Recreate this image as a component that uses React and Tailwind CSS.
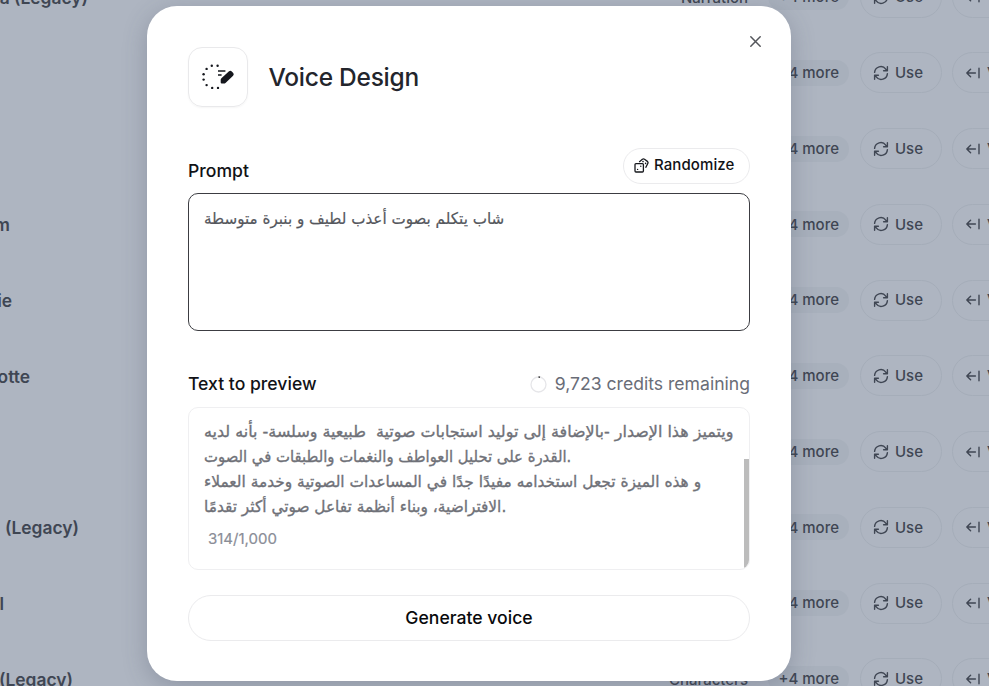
import React from 'react';

const rows = [
  { name: 'Matilda (Legacy)', end: 88, tag: 'Narration' },
  { name: '', end: 0 },
  { name: '', end: 0 },
  { name: 'Liam', end: 10 },
  { name: 'Jessie', end: 12 },
  { name: 'Charlotte', end: 30 },
  { name: '', end: 0 },
  { name: '(Legacy)', end: 79 },
  { name: 'Bill', end: 4 },
  { name: '(Legacy)', end: 73, tag: 'Characters' },
];

const RefreshIcon = () => (
  <svg className="mb-[1px]" width="16" height="16" viewBox="0 0 16 16" fill="none" stroke="currentColor" strokeWidth="1.4" strokeLinecap="round" strokeLinejoin="round">
    <path d="M1.6 7.4A6.2 6.2 0 0 1 12.8 4.2L14.2 5.8M14.4 1.8V5.8H10.6" />
    <path d="M14.4 8.6A6.2 6.2 0 0 1 3.2 11.8L1.8 10.2M1.6 14.2V10.2H5.4" />
  </svg>
);

const ArrowIcon = () => (
  <svg className="mb-[1px]" width="16" height="14" viewBox="0 0 16 14" fill="none" stroke="currentColor" strokeWidth="1.4" strokeLinecap="round" strokeLinejoin="round">
    <path d="M5.6 3.2 1.8 7 5.6 10.8M1.8 7H10.4M14 2.2V11.8" />
  </svg>
);

const VoiceIcon = () => (
  <svg width="34" height="28" viewBox="0 0 34 28" fill="none">
    <g fill="#15171d">
      <circle cx="16.6" cy="2.8" r="1.2" />
      <circle cx="10.8" cy="2.8" r="1.2" />
      <circle cx="5.6" cy="5.9" r="1.2" />
      <circle cx="2.6" cy="11.2" r="1.2" />
      <circle cx="2.6" cy="16.6" r="1.2" />
      <circle cx="5.6" cy="22.1" r="1.2" />
      <circle cx="11.2" cy="24.9" r="1.2" />
      <circle cx="17" cy="24.9" r="1.2" />
    </g>
    <path d="M17 8H24.4M17 12H20.6" stroke="#15171d" strokeWidth="1.5" />
    <path d="M20.4 15.2 28 8.3Q29.4 7.2 30.8 8.5L32.2 10.1Q33.4 11.4 32.1 12.8L24.5 20Q23.8 20.6 22.8 20.6H20.8Q19.7 20.6 19.7 19.6V16.8Q19.7 15.8 20.4 15.2Z" fill="#15171d" />
  </svg>
);

const DiceIcon = () => (
  <svg width="15" height="15" viewBox="0 0 15 15" fill="none" stroke="#16181d" strokeWidth="1.3" strokeLinejoin="round">
    <rect x="1" y="5.6" width="8.4" height="8.4" rx="1" />
    <path d="M5.2 3.9 8.4 1.3Q9.4.6 10.5 1.3L13.4 3.4Q14.4 4.3 13.8 5.5L11.6 9.8" />
    <g fill="#16181d" stroke="none">
      <circle cx="3.6" cy="11.4" r=".7" />
      <circle cx="6.8" cy="8.3" r=".7" />
      <circle cx="9" cy="3.6" r=".8" />
      <circle cx="11.6" cy="5.4" r=".8" />
    </g>
  </svg>
);

const VoiceRow = ({ name, end, tag }) => (
  <div className="flex h-[75.75px] w-[1040px] shrink-0 items-center text-[15px] font-medium">
    <div className="flex shrink-0 justify-end overflow-hidden whitespace-nowrap pt-[2px] text-[17.4px] font-semibold" style={{ width: end }}>
      <span>{name}</span>
    </div>
    <div className="flex flex-1 justify-end pr-[20px] pt-[2px]">{tag}</div>
    <div className="flex h-[26px] w-[81px] shrink-0 items-center justify-end whitespace-nowrap rounded-full bg-[#a8b0bc] pr-[10px] pt-[1px]">
      +4 more
    </div>
    <div className="ml-[11px] flex h-[41px] w-[82px] shrink-0 items-center gap-[6px] rounded-full border border-[#a5adb9] pl-[12px] pt-[1px]">
      <RefreshIcon />
      Use
    </div>
    <div className="ml-[10px] mr-[-10px] flex h-[41px] w-[98px] shrink-0 items-center gap-[6px] rounded-full border border-[#a5adb9] pl-[12px] pt-[1px]">
      <ArrowIcon />
      View
    </div>
  </div>
);

const VoiceDesignModal = () => (
  <div className="relative h-[675px] w-[644px] rounded-[30px] bg-white px-[41px] pt-[41px] shadow-[0_6px_24px_rgba(60,70,90,0.28)]">
    <button type="button" aria-label="Close" className="absolute right-[29px] top-[29px]">
      <svg width="13" height="13" viewBox="0 0 13 13" stroke="#54565b" strokeWidth="1.5" strokeLinecap="round">
        <path d="M1.8 1.8 11.2 11.2M11.2 1.8 1.8 11.2" />
      </svg>
    </button>

    <div className="flex items-center gap-[20.5px]">
      <div className="flex size-[60px] items-center justify-center rounded-[14px] border border-[#e9e9eb] shadow-[0_1px_2px_rgba(0,0,0,0.04)]">
        <VoiceIcon />
      </div>
      <h1 className="text-[24.5px] font-medium tracking-[-0.25px] text-[#23252c]">Voice Design</h1>
    </div>

    <div className="mt-[41px] flex h-[35px] items-center justify-between">
      <label className="pt-[12px] text-[17.6px] font-medium text-[#111216]">Prompt</label>
      <button type="button" className="flex h-[36px] w-[127px] items-center gap-[5px] rounded-full border border-[#ebebed] pl-[10px] text-[15px] font-medium tracking-[0.1px] text-[#111216]">
        <DiceIcon />
        Randomize
      </button>
    </div>

    <div dir="ltr" className="mt-[10px] h-[138px] rounded-[10px] border border-[#3c3d42] px-[15px] pt-[12px] font-['DejaVu_Sans',sans-serif] text-[16px] leading-[25px] text-[#55575d]">
      <p className="origin-left scale-x-[0.946] whitespace-nowrap [-webkit-text-stroke:0.2px]">شاب يتكلم بصوت أعذب لطيف و بنبرة متوسطة</p>
    </div>

    <div className="mt-[40px] flex h-[26px] items-center justify-between">
      <label className="text-[17.6px] font-medium text-[#111216]">Text to preview</label>
      <div className="flex items-center gap-[8px] text-[17.6px] text-[#696d77]">
        <svg width="17" height="17" viewBox="0 0 17 17" fill="none" strokeWidth="1.3">
          <circle cx="8.5" cy="8.5" r="7.5" stroke="#e6e6e9" />
          <path d="M8.5 1A7.5 7.5 0 0 1 10 1.2" stroke="#333" strokeWidth="1.6" />
        </svg>
        9,723 credits remaining
      </div>
    </div>

    <div className="mt-[10px] flex h-[163px] justify-between overflow-hidden rounded-[10px] border border-[#efeff1] pl-[15px]">
      <div className="pt-[11px]">
        <div dir="ltr" className="whitespace-pre font-['DejaVu_Sans',sans-serif] text-[16px] leading-[25px] text-[#6f7178] [-webkit-text-stroke:0.35px]">
          <p className="origin-left scale-x-[0.996]">ويتميز هذا الإصدار -بالإضافة إلى توليد استجابات صوتية  طبيعية وسلسة- بأنه لديه</p>
          <p className="origin-left scale-x-[0.927]">القدرة على تحليل العواطف والنغمات والطبقات في الصوت.</p>
          <p className="origin-left scale-x-[0.963]">و هذه الميزة تجعل استخدامه مفيدًا جدًا في المساعدات الصوتية وخدمة العملاء</p>
          <p className="origin-left scale-x-[0.959]">الافتراضية، وبناء أنظمة تفاعل صوتي أكثر تقدمًا.</p>
        </div>
        <p className="ml-[4px] mt-[8px] text-[15px] leading-[24px] text-[#8a8d97] [-webkit-text-stroke:0.2px]">314/1,000</p>
      </div>
      <div className="mt-[51px] w-[5px] shrink-0 bg-[#bcbcbc]" />
    </div>

    <button type="button" className="mt-[25px] h-[46px] w-full rounded-full border border-[#ebebed] text-[17.6px] font-medium text-[#08090b]">
      Generate voice
    </button>
  </div>
);

const App = () => {
  return (
    <div className="relative h-[686px] w-[989px] overflow-hidden bg-[#aeb5c1] font-['Inter',sans-serif] text-[#3f4653]">
      <div className="-mt-[40.7px] flex flex-col">
        {rows.map((row, index) => (
          <VoiceRow key={index} {...row} />
        ))}
      </div>
      <div className="absolute inset-0 pl-[147px] pt-[6px]">
        <VoiceDesignModal />
      </div>
    </div>
  );
};

export default App;
